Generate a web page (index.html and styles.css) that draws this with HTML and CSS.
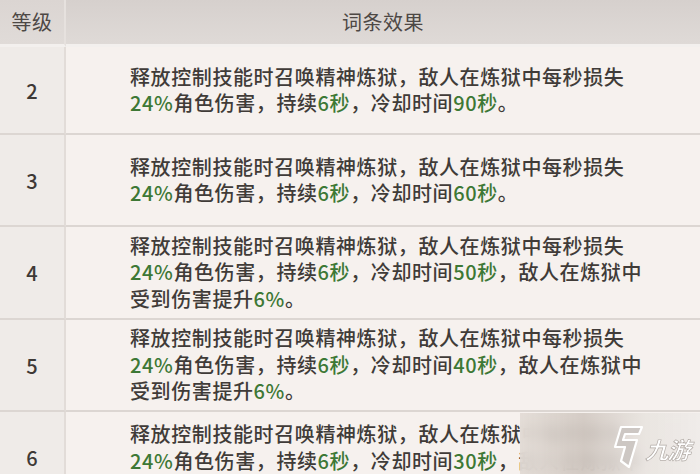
FILE: index.html
```html
<!DOCTYPE html>
<html lang="zh">
<head>
<meta charset="utf-8">
<link rel="stylesheet" href="styles.css">
</head>
<body>
<div class="table">
  <div class="head lv">等级</div>
  <div class="head fx">词条效果</div>

  <div class="cell lv">2</div>
  <div class="cell fx"><p>释放控制技能时召唤精神炼狱，敌人在炼狱中每秒损失<br><span class="g">24%</span>角色伤害，持续<span class="g">6秒</span>，冷却时间<span class="g">90秒</span>。</p></div>

  <div class="cell lv">3</div>
  <div class="cell fx"><p>释放控制技能时召唤精神炼狱，敌人在炼狱中每秒损失<br><span class="g">24%</span>角色伤害，持续<span class="g">6秒</span>，冷却时间<span class="g">60秒</span>。</p></div>

  <div class="cell lv">4</div>
  <div class="cell fx"><p>释放控制技能时召唤精神炼狱，敌人在炼狱中每秒损失<br><span class="g">24%</span>角色伤害，持续<span class="g">6秒</span>，冷却时间<span class="g">50秒</span>，敌人在炼狱中<br>受到伤害提升<span class="g">6%</span>。</p></div>

  <div class="cell lv">5</div>
  <div class="cell fx"><p>释放控制技能时召唤精神炼狱，敌人在炼狱中每秒损失<br><span class="g">24%</span>角色伤害，持续<span class="g">6秒</span>，冷却时间<span class="g">40秒</span>，敌人在炼狱中<br>受到伤害提升<span class="g">6%</span>。</p></div>

  <div class="cell lv last"><span class="num">6</span></div>
  <div class="cell fx last"><p>释放控制技能时召唤精神炼狱，敌人在炼狱中每秒损失<br><span class="g">24%</span>角色伤害，持续<span class="g">6秒</span>，冷却时间<span class="g">30秒</span>，敌人在炼狱中</p></div>
</div>

<div class="mark">
  <svg class="logo" width="32" height="44" viewBox="0 0 32 44">
    <path d="M10 2 L31 2 L28 9 L14 9 L12 15 L26 15 L18 42 L10 36 L14 22 L4 22 Z" fill="#cdc7c3" stroke="#ffffff" stroke-width="2.2" stroke-linejoin="round"/>
  </svg>
  <span class="brand">九游</span>
</div>
</body>
</html>
```
FILE: styles.css
```css
html, body {
  margin: 0;
  padding: 0;
}
body {
  width: 700px;
  height: 474px;
  overflow: hidden;
  position: relative;
  background: #f5f0ed;
  font-family: "Noto Sans CJK SC", "Noto Sans", sans-serif;
  color: #403b38;
}
.table {
  display: grid;
  grid-template-columns: 66px 1fr;
  grid-template-rows: 47px 88px 92px 93px 92px 62px;
}
.head {
  background: linear-gradient(#d6d0cd, #dfdad7);
  border-bottom: 3px solid #f3f0ee;
  display: flex;
  align-items: center;
  justify-content: center;
  font-size: 20px;
  color: #4d4845;
  letter-spacing: 0.5px;
  padding-bottom: 2px;
}
.head.lv {
  border-right: 2px solid #e6e1de;
  background: linear-gradient(#dbd5d2, #e0dbd8);
}
.cell {
  display: flex;
  align-items: center;
  border-bottom: 2px solid #dcd6d2;
  box-sizing: border-box;
}
.cell.lv {
  justify-content: center;
  background: #efebe8;
  border-right: 2px solid #e2dcd8;
  font-size: 20px;
  font-weight: 500;
  color: #3e3936;
}
.cell.fx {
  background: #f6f1ee;
  padding-left: 64px;
}
.cell.last {
  border-bottom: 0;
  align-items: flex-start;
}
.cell.fx.last {
  padding-top: 9px;
}
.cell.lv.last {
  padding-top: 34px;
}
.num {
  line-height: 24px;
}
.cell p {
  margin: 0;
  font-size: 20px;
  font-weight: 500;
  line-height: 26.5px;
  letter-spacing: 0.6px;
}
.g {
  color: #3d7835;
}
.mark {
  position: absolute;
  left: 520px;
  top: 413px;
  width: 180px;
  height: 61px;
  backdrop-filter: blur(6px);
  background: linear-gradient(90deg, rgba(226,219,213,0.92), rgba(208,199,192,0.88) 35%, rgba(232,227,223,0.88) 70%, rgba(238,235,232,0.85));
  display: flex;
  align-items: center;
  padding-left: 91px;
  box-sizing: border-box;
  gap: 5px;
}
.logo {
  margin-top: 6px;
}
.brand {
  font-family: "Noto Sans CJK SC", sans-serif;
  font-size: 23px;
  font-weight: 700;
  color: #ffffff;
  transform: skewX(-16deg);
  -webkit-text-stroke: 0.7px #b3aca7;
  letter-spacing: -1px;
  margin-top: 10px;
}
```
